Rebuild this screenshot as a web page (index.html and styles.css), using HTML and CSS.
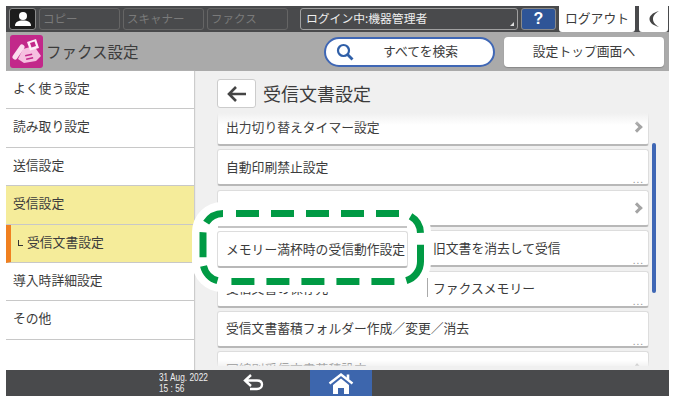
FILE: index.html
```html
<!DOCTYPE html>
<html lang="ja">
<head>
  <meta charset="UTF-8" />
  <title>ファクス設定</title>
  <link rel="stylesheet" href="styles.css">
</head>
<body>
  <div class="screen">
    <div class="topbar">
      <div class="user-btn">
        <svg width="20" height="16" viewBox="0 0 20 16"><circle cx="10" cy="5" r="4" fill="#fff"/><path d="M2 15c0-4 3-5.500 8-5.500s8 1.500 8 5.500z" fill="#fff"/></svg>
      </div>
      <div class="tab">コピー</div>
      <div class="tab">スキャナー</div>
      <div class="tab">ファクス</div>
      <div class="login-box">ログイン中:機器管理者<span class="corner"></span></div>
      <div class="help-btn">?</div>
      <div class="logout-btn">ログアウト</div>
      <div class="moon-btn">
        <svg width="12" height="18" viewBox="0 0 12 18"><path d="M11 1C4 3 1.500 6 1.500 9s2.500 6 9.500 8C6.500 14 5 12 5 9s1.500-5 6-8z" fill="#444"/></svg>
      </div>
    </div>

    <div class="titlebar">
      <div class="app-icon">
        <svg width="33" height="33" viewBox="0 0 33 33">
          <path d="M13 14l11-3 7 10-5 5-12 2-6-4z" fill="#f6bfe0"/>
          <path d="M5 22l7-10" stroke="#fbdcee" stroke-width="5" stroke-linecap="round"/>
          <path d="M17 7l9-3 3 9-9 2.500z" fill="#fdeef7"/>
          <path d="M20 8l4.500-1.500 1.500 4.500-4.500 1.500z" fill="#c2288a"/>
          <path d="M15 20l7-1.500.3 1.500-7 1.500zM16 23.500l7-1.500.3 1.500-7 1.500z" fill="#c2288a"/>
        </svg>
      </div>
      <div class="app-title">ファクス設定</div>
      <div class="search-pill">
        <svg width="18" height="18" viewBox="0 0 18 18"><circle cx="7.500" cy="7.500" r="5.500" fill="none" stroke="#2f5fa8" stroke-width="2.200"/><path d="M11.500 11.500L16.500 16.500" stroke="#2f5fa8" stroke-width="2.800"/></svg>
        <span class="search-text">すべてを検索</span>
      </div>
      <div class="top-btn">設定トップ画面へ</div>
    </div>

    <div class="body-row">
      <div class="sidebar">
        <div class="nav-item">よく使う設定</div>
        <div class="nav-item">読み取り設定</div>
        <div class="nav-item">送信設定</div>
        <div class="nav-item nav-on">受信設定</div>
        <div class="nav-item nav-on nav-sub"><span class="sub-mark"></span>受信文書設定</div>
        <div class="nav-item">導入時詳細設定</div>
        <div class="nav-item">その他</div>
      </div>

      <div class="main">
        <div class="main-head">
          <div class="back-btn">
            <svg width="20" height="18" viewBox="0 0 20 18"><path d="M9 2L2 9l7 7M2 9h17" fill="none" stroke="#444" stroke-width="2.600"/></svg>
          </div>
          <div class="main-title">受信文書設定</div>
        </div>
        <div class="list-wrap">
          <div class="list">
            <div class="row"><span>出力切り替えタイマー設定</span><span class="chevron"></span></div>
            <div class="row"><span>自動印刷禁止設定</span><span class="dots">...</span></div>
            <div class="row"><span class="chevron"></span></div>
            <div class="row"><span class="row-label">メモリー満杯時の受信動作設定</span><span class="row-value">旧文書を消去して受信</span><span class="dots">...</span></div>
            <div class="row"><span class="row-label">受信文書の保存先</span><span class="row-value with-line">ファクスメモリー</span><span class="dots">...</span></div>
            <div class="row"><span>受信文書蓄積フォルダー作成／変更／消去</span><span class="dots">...</span></div>
            <div class="row"><span>回線別受信文書蓄積設定</span><span class="chevron"></span></div>
          </div>
          <div class="fade-top"></div>
          <div class="fade-bottom"></div>
        </div>
        <div class="scrollbar"></div>
      </div>
    </div>

    <div class="bottombar">
      <div class="clock">31 Aug. 2022<br>15 : 56</div>
      <div class="back-arrow">
        <svg width="24" height="20" viewBox="0 0 24 20"><path d="M9 2L3 7.500l6 5.500M3 7.500h12c3 0 5 1.500 5 4s-2 4.500-5 4.500H8" fill="none" stroke="#fff" stroke-width="2.400"/></svg>
      </div>
      <div class="home-btn">
        <svg width="26" height="21" viewBox="0 0 26 21"><path d="M1.500 10.500L13 1.500l11.500 9" fill="none" stroke="#fff" stroke-width="2.400"/><path d="M20 1.500v5" stroke="#fff" stroke-width="2.600"/><path d="M5 12l8-6.500 8 6.500v9h-5v-6h-6v6H5z" fill="#fff"/></svg>
      </div>
    </div>

    <!-- annotation over the screen -->
    <div class="callout">
      <svg class="callout-line" width="239" height="90" viewBox="0 0 239 90">
        <rect x="11" y="11.500" width="217.500" height="68" rx="20" fill="none" stroke="#009a44" stroke-width="7" stroke-dasharray="0 13 23 12 23 12 23 12 23 12 23 12 20 12 42 12 23 12 23 12 23 12 23 12 23 14 21 9 25 10 20.600"/>
      </svg>
      <div class="callout-card">メモリー満杯時の受信動作設定</div>
    </div>
  </div>
</body>
</html>
```

FILE: styles.css
```css
* {
  box-sizing: border-box;
}

html, body {
  margin: 0;
  height: 100%;
  background: #fff;
}

body {
  padding: 6px;
  font-family: "Noto Sans CJK JP", "Noto Sans", sans-serif;
  font-size: 12.8px;
  color: #3c3c3c;
  overflow: hidden;
}

.screen {
  position: relative;
  width: 663px;
  height: 390px;
  display: flex;
  flex-direction: column;
  background: #f0f0f0;
}

/* top status bar */
.topbar {
  height: 26px;
  flex: none;
  display: flex;
  align-items: center;
  background: #494a4c;
  padding-left: 3px;
}

.user-btn {
  width: 27px;
  height: 22px;
  display: flex;
  align-items: center;
  justify-content: center;
  background: #1c1c1c;
  border: 1px solid #8a8a8a;
  border-radius: 3px;
}

.tab {
  width: 81px;
  height: 22px;
  margin-left: 3px;
  padding-left: 3px;
  line-height: 18px;
  font-size: 11.500px;
  color: #7a7a7a;
  border: 1px solid #656565;
  border-radius: 3px;
}

.login-box {
  position: relative;
  width: 218px;
  height: 22px;
  margin-left: 12px;
  padding-left: 5px;
  line-height: 18px;
  font-size: 11.800px;
  color: #eee;
  border: 1px solid #a0a0a0;
  border-radius: 3px;
}

.corner {
  position: absolute;
  right: 3px;
  bottom: 3px;
  border-left: 4px solid transparent;
  border-bottom: 4px solid #ddd;
}

.help-btn {
  width: 35px;
  height: 22px;
  margin-left: 3px;
  text-align: center;
  line-height: 20px;
  font-family: "Liberation Sans", sans-serif;
  font-size: 16px;
  font-weight: bold;
  color: #fff;
  background: #2f5597;
  border: 1px solid #8a8a8a;
  border-radius: 3px;
}

.logout-btn {
  width: 76px;
  height: 26px;
  margin-left: 3px;
  text-align: center;
  line-height: 23px;
  background: #fff;
  border-radius: 0 0 3px 3px;
}

.moon-btn {
  width: 29px;
  height: 26px;
  margin-left: 4px;
  display: flex;
  align-items: center;
  justify-content: center;
  background: #fff;
  border-radius: 0 0 3px 3px;
}

/* title bar */
.titlebar {
  height: 39px;
  flex: none;
  display: flex;
  align-items: center;
  background: #aaaaaa;
  padding-left: 4px;
}

.app-icon {
  width: 33px;
  height: 33px;
  background: #c2288a;
  border-radius: 3px;
}

.app-title {
  width: 278px;
  margin-left: 3px;
  padding-bottom: 2px;
  font-size: 15.500px;
}

.search-pill {
  width: 171px;
  height: 30px;
  display: flex;
  align-items: center;
  padding-left: 10px;
  background: #fff;
  border: 2px solid #3f67b5;
  border-radius: 15px;
}

.search-text {
  margin-left: 29px;
  padding-bottom: 2px;
}

.top-btn {
  width: 160px;
  height: 30px;
  margin-left: 9px;
  text-align: center;
  line-height: 27px;
  background: #fff;
  border-radius: 4px;
  box-shadow: 0 1px 1px #888;
}

/* body */
.body-row {
  flex: 1;
  display: flex;
  min-height: 0;
}

.sidebar {
  width: 188px;
  flex: none;
  background: #fff;
  box-shadow: 1px 0 1px #ccc;
}

.nav-item {
  height: 38.400px;
  padding-left: 7px;
  line-height: 34px;
  border-bottom: 1px solid #c8c8c8;
}

.nav-on {
  background: #f5ec9a;
}

.nav-sub {
  display: flex;
  align-items: center;
  padding-left: 7px;
  padding-bottom: 2px;
  border-left: 5px solid #f08020;
}

.sub-mark {
  width: 5px;
  height: 6px;
  margin-right: 4px;
  margin-top: 2px;
  border-left: 1.500px solid #333;
  border-bottom: 1.500px solid #333;
}

.main {
  position: relative;
  flex: 1;
  display: flex;
  flex-direction: column;
  padding: 8px 20px 0 23px;
}

.main-head {
  display: flex;
  align-items: center;
  height: 29px;
  flex: none;
}

.back-btn {
  width: 39px;
  height: 29px;
  display: flex;
  align-items: center;
  justify-content: center;
  background: #fff;
  border: 1px solid #ccc;
  border-radius: 3px;
}

.main-title {
  margin-left: 7px;
  padding-bottom: 2px;
  font-size: 18px;
}

.list-wrap {
  position: relative;
  flex: 1;
  margin-top: 5px;
  margin-bottom: 4px;
  overflow: hidden;
}

.list {
  margin-top: -4px;
}

.row {
  position: relative;
  height: 37px;
  margin-bottom: 3.400px;
  display: flex;
  align-items: center;
  padding: 0 0 2px 8px;
  background: #fff;
  border: 1px solid #ddd;
  border-bottom: 2px solid #b8b8b8;
  border-radius: 3px;
}

.row-label {
  width: 201px;
  flex: none;
}

.row-value {
  padding-left: 6px;
}

.with-line {
  padding-left: 5px;
  border-left: 1px solid #aaa;
}

.chevron {
  position: absolute;
  right: 7px;
  top: 13px;
  width: 8px;
  height: 8px;
  border-top: 3px solid #a4a4a4;
  border-right: 3px solid #a4a4a4;
  transform: rotate(45deg);
}

.dots {
  position: absolute;
  right: 4px;
  bottom: 1px;
  line-height: 8px;
  font-size: 10px;
  letter-spacing: 1px;
  color: #999;
}

.fade-top, .fade-bottom {
  position: absolute;
  left: 0;
  right: 0;
}

.fade-top {
  top: 0;
  height: 12px;
  background: linear-gradient(#f0f0f0, rgba(240,240,240,0));
}

.fade-bottom {
  bottom: 0;
  height: 6px;
  background: linear-gradient(rgba(240,240,240,0), rgba(240,240,240,0.8));
}

.scrollbar {
  position: absolute;
  left: 458px;
  top: 72px;
  width: 4px;
  height: 150px;
  background: #3f67b5;
  border-radius: 2px;
}

/* bottom bar */
.bottombar {
  height: 26px;
  flex: none;
  display: flex;
  align-items: center;
  background: #494a4c;
}

.clock {
  width: 60px;
  margin-left: 153px;
  font-family: "Liberation Sans", sans-serif;
  font-size: 10.500px;
  line-height: 11px;
  white-space: nowrap;
  color: #eee;
  transform: scaleX(0.79);
  transform-origin: left center;
}

.back-arrow {
  width: 24px;
  height: 20px;
  margin-left: 23px;
}

.home-btn {
  width: 62px;
  height: 26px;
  margin-left: 44px;
  display: flex;
  align-items: center;
  justify-content: center;
  background: #3d66ad;
}

/* green dashed highlight */
.callout {
  position: absolute;
  left: 186px;
  top: 196px;
  width: 239px;
  height: 90px;
  background: #fff;
  border-radius: 30px;
}

.callout-line {
  display: block;
}

.callout-card {
  position: absolute;
  left: 25px;
  top: 29px;
  width: 191px;
  height: 37px;
  padding-left: 8px;
  line-height: 33px;
  background: #fff;
  border: 1px solid #ddd;
  border-bottom: 2px solid #b8b8b8;
  border-radius: 3px;
}

.callout-card::before {
  content: "";
  position: absolute;
  left: 0;
  right: 0;
  top: -6px;
  height: 2px;
  background: #c4c4c4;
}
```
